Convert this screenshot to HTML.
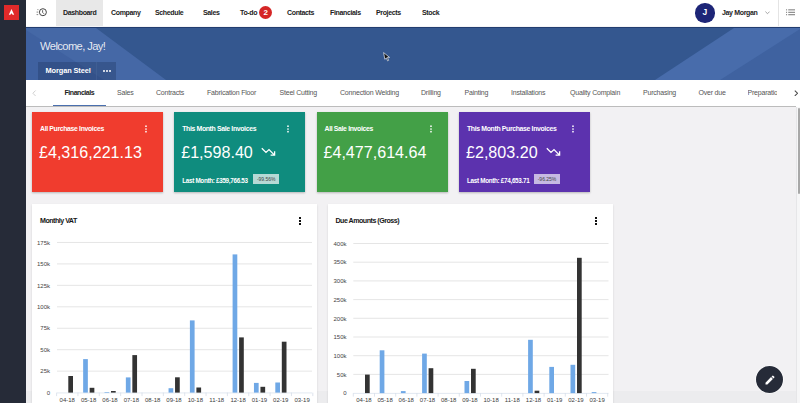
<!DOCTYPE html>
<html><head><meta charset="utf-8">
<style>
*{box-sizing:border-box;margin:0;padding:0}
html,body{width:800px;height:403px;overflow:hidden;background:#f2f1f3;font-family:"Liberation Sans",sans-serif}
.abs{position:absolute}
#side{left:0;top:0;width:26px;height:403px;background:#262b38}
#logo{left:4px;top:5px;width:15.4px;height:14.8px;background:#e12a2a;color:#fff;font-weight:bold;font-size:7px;text-align:center;line-height:15px}
#hdr{left:26px;top:0;width:774px;height:27px;background:#fff;border-bottom:1px solid #f4f4f6}
.nav{position:absolute;top:0;height:26px;line-height:26px;font-size:7px;font-weight:bold;color:#222;letter-spacing:-0.35px;white-space:nowrap}
#banner{left:26px;top:27px;width:774px;height:53px;background:#34578f;overflow:hidden;border-top:1px solid #223d70}
#tabs{left:26px;top:80px;width:770px;height:27px;background:#fff;border-bottom:1px solid #bcbcbc}
.tab{position:absolute;top:0;height:26px;line-height:26px;font-size:7px;color:#555;white-space:nowrap;letter-spacing:-0.2px}
.card{position:absolute;top:112px;height:80px;color:#fff;box-shadow:0 1px 2px rgba(0,0,0,.25)}
.card .t{position:absolute;left:8px;top:13px;font-size:6.9px;font-weight:bold;letter-spacing:-0.35px;white-space:nowrap}
.card .v{position:absolute;left:7px;top:30.7px;font-size:16.1px;white-space:nowrap;letter-spacing:0}
.card .dots{position:absolute;top:13px;width:2px;height:8px}
.card .dots i{display:block;width:1.6px;height:1.6px;background:#fff;margin-bottom:1.2px;border-radius:1px}
.card .lm{position:absolute;left:8px;top:64.5px;font-size:6.3px;font-weight:bold;letter-spacing:-0.3px;white-space:nowrap}
.card .bd{position:absolute;top:62px;height:10px;width:26px;font-size:5px;line-height:10px;text-align:center;color:#444}
.ch{position:absolute;top:204px;height:220px;background:#fff;box-shadow:0 1px 2px rgba(0,0,0,.12)}
.ch .title{position:absolute;left:8px;top:12.7px;font-size:7.1px;font-weight:bold;color:#161616;letter-spacing:-0.5px}
.ch .dots{position:absolute;top:13px;width:2px}
.ch .dots i{display:block;width:2px;height:2px;background:#111;margin-bottom:1px}
</style></head><body>
<div id="side" class="abs"></div>
<div id="logo" class="abs"><svg class="abs" style="left:0;top:0" width="15.4" height="15" viewBox="0 0 15.4 15"><path d="M7.5 3.9L10.2 9.8H8.6L7.5 8.3 6.4 9.8H4.8Z" fill="#fff"/></svg></div>
<div id="hdr" class="abs">
  <svg class="abs" style="left:8px;top:6px" width="16" height="14" viewBox="0 0 16 14">
    <circle cx="8.9" cy="6.2" r="3.5" fill="none" stroke="#3a3a3a" stroke-width=".95"/>
    <path d="M8.6 4.2V6.4L10 7.8" fill="none" stroke="#3a3a3a" stroke-width=".8"/>
    <path d="M3.4 3.6h1M2.6 6.1h1.6M2.6 8.6h1.6" stroke="#666" stroke-width=".8"/>
  </svg>
  <div class="abs" style="left:30px;top:0;width:47px;height:26px;background:#e8e8e8"></div>
  <div class="nav" style="left:37px">Dashboard</div>
  <div class="nav" style="left:85px">Company</div>
  <div class="nav" style="left:129px">Schedule</div>
  <div class="nav" style="left:177px">Sales</div>
  <div class="nav" style="left:214px">To-do</div>
  <div class="abs" style="left:233px;top:5.5px;width:13.3px;height:13.3px;border-radius:50%;background:#d52626;color:#fff;font-size:8px;font-weight:bold;text-align:center;line-height:13.5px">2</div>
  <div class="nav" style="left:261px">Contacts</div>
  <div class="nav" style="left:304px">Financials</div>
  <div class="nav" style="left:350px">Projects</div>
  <div class="nav" style="left:396px">Stock</div>
  <div class="abs" style="left:669px;top:3px;width:19.5px;height:19.5px;border-radius:50%;background:#1d2577;color:#fff;font-size:8.5px;font-weight:bold;text-align:center;line-height:19.5px">J</div>
  <div class="nav" style="left:696px">Jay Morgan</div>
  <svg class="abs" style="left:739px;top:11px" width="5" height="3.5" viewBox="0 0 5 3.5"><path d="M.4 .6L2.5 2.7 4.6.6" fill="none" stroke="#888" stroke-width=".75"/></svg>
  <div class="abs" style="left:752px;top:0;width:1px;height:26px;background:#e4e4e4"></div>
  <svg class="abs" style="left:760.3px;top:8.8px" width="9" height="7.5" viewBox="0 0 10 8">
    <path d="M0 .8h1.2M0 3.5h1.2M0 6.2h1.2M2.5 .8H10M2.5 3.5H10M2.5 6.2H10" stroke="#555" stroke-width=".9"/>
  </svg>
</div>
<div id="banner" class="abs">
  <svg width="774" height="52" viewBox="0 0 774 52" style="position:absolute;left:0;top:0">
    <polygon points="0,0 70,0 140,52 0,52" fill="#4568a6"/>
    <polygon points="0,2 78,52 0,52" fill="#3f61a0"/>
    <polygon points="629,52 708,0 774,0 774,52" fill="#486cab"/>
    <polygon points="694,52 774,1 774,52" fill="#3f62a0"/>
  </svg>
  <div class="abs" style="left:14px;top:12px;font-size:11.2px;color:rgba(255,255,255,.88);letter-spacing:-0.6px;white-space:nowrap">Welcome, Jay!</div>
  <div class="abs" style="left:12px;top:34px;width:78px;height:18px;background:rgba(20,40,80,.28)"></div>
  <div class="abs" style="left:70px;top:34px;width:1px;height:18px;background:rgba(80,110,160,.35)"></div>
  <div class="abs" style="left:19.5px;top:34px;line-height:18px;font-size:7.4px;font-weight:bold;color:#fff;white-space:nowrap;letter-spacing:-0.1px">Morgan Steel</div>
  <div class="abs" style="left:77px;top:42px;width:2px;height:2px;background:#fff;border-radius:1px;box-shadow:3px 0 0 #fff,6px 0 0 #fff"></div>
</div>
<div class="abs" style="left:796px;top:80px;width:4px;height:27px;background:#fff"></div>
<div id="tabs" class="abs">
  <svg class="abs" style="left:6.2px;top:10px" width="4.5" height="6.5" viewBox="0 0 4.5 6.5"><path d="M3.6 .5L.9 3.25 3.6 6" fill="none" stroke="#c4c4c4" stroke-width=".8"/></svg>
  <div class="tab" style="left:38.5px;color:#222;font-weight:bold;letter-spacing:-0.45px">Financials</div>
  <div class="abs" style="left:27px;top:25px;width:53px;height:1.4px;background:#4a6fae"></div>
  <div class="tab" style="left:91px">Sales</div>
  <div class="tab" style="left:130px">Contracts</div>
  <div class="tab" style="left:181px">Fabrication Floor</div>
  <div class="tab" style="left:253.5px">Steel Cutting</div>
  <div class="tab" style="left:314px">Connection Welding</div>
  <div class="tab" style="left:395px">Drilling</div>
  <div class="tab" style="left:438.5px">Painting</div>
  <div class="tab" style="left:485px">Installations</div>
  <div class="tab" style="left:544px">Quality Complain</div>
  <div class="tab" style="left:617px">Purchasing</div>
  <div class="tab" style="left:672.5px">Over due</div>
  <div class="tab" style="left:721.5px;width:29.3px;overflow:hidden">Preparation</div>
  <svg class="abs" style="left:767.5px;top:9.6px" width="4.5" height="6.5" viewBox="0 0 4.5 6.5"><path d="M.8 .6L3.5 3.25 .8 5.9" fill="none" stroke="#444" stroke-width="1.05"/></svg>
</div>
<svg class="abs" style="left:382.5px;top:51.5px" width="8" height="10" viewBox="0 0 8 10"><path d="M.6 .6L6.6 5.4H4.4L5.6 8.4 4.6 8.9 3.4 5.9 1.8 7.3Z" fill="#111" stroke="#e8eef8" stroke-width=".7"/></svg>
<div class="abs" style="left:26px;top:391px;width:771px;height:12px;background:#ececee"></div>
<div class="abs" style="left:796px;top:107px;width:4px;height:296px;background:#f6f6f7;border-left:1px solid #e6e6e8"></div>
<div class="abs" style="left:797.5px;top:108px;width:2.5px;height:86px;background:#a8a8a8;border-radius:1.2px"></div>

<div class="card" style="left:32px;width:131px;background:#f03c2e">
  <div class="t">All Purchase Invoices</div>
  <svg class="abs" style="left:112px;top:12px" width="4" height="10" viewBox="0 0 4 10"><circle cx="2" cy="2.2" r=".85" fill="#fff"/><circle cx="2" cy="5" r=".85" fill="#fff"/><circle cx="2" cy="7.7" r=".85" fill="#fff"/></svg>
  <div class="v">£4,316,221.13</div>
</div>
<div class="card" style="left:174.2px;width:131px;background:#0f8c7e">
  <div class="t">This Month Sale Invoices</div>
  <svg class="abs" style="left:112px;top:12px" width="4" height="10" viewBox="0 0 4 10"><circle cx="2" cy="2.2" r=".85" fill="#fff"/><circle cx="2" cy="5" r=".85" fill="#fff"/><circle cx="2" cy="7.7" r=".85" fill="#fff"/></svg>
  <div class="v">£1,598.40</div>
  <svg class="abs" style="left:87px;top:35px" width="16" height="10" viewBox="0 0 16 10"><path d="M.8 1.2L5 5.4 8 2.6 13 7.6M9.6 8.2H13.6V4.2" fill="none" stroke="#fff" stroke-width="1.3"/></svg>
  <div class="lm">Last Month: £359,766.53</div>
  <div class="bd" style="left:79px;background:#b6d9d5">-99.56%</div>
</div>
<div class="card" style="left:316.5px;width:131.5px;background:#43a047">
  <div class="t">All Sale Invoices</div>
  <svg class="abs" style="left:112px;top:12px" width="4" height="10" viewBox="0 0 4 10"><circle cx="2" cy="2.2" r=".85" fill="#fff"/><circle cx="2" cy="5" r=".85" fill="#fff"/><circle cx="2" cy="7.7" r=".85" fill="#fff"/></svg>
  <div class="v">£4,477,614.64</div>
</div>
<div class="card" style="left:459px;width:130.7px;background:#5c32ae">
  <div class="t">This Month Purchase Invoices</div>
  <svg class="abs" style="left:112px;top:12px" width="4" height="10" viewBox="0 0 4 10"><circle cx="2" cy="2.2" r=".85" fill="#fff"/><circle cx="2" cy="5" r=".85" fill="#fff"/><circle cx="2" cy="7.7" r=".85" fill="#fff"/></svg>
  <div class="v">£2,803.20</div>
  <svg class="abs" style="left:87px;top:35px" width="16" height="10" viewBox="0 0 16 10"><path d="M.8 1.2L5 5.4 8 2.6 13 7.6M9.6 8.2H13.6V4.2" fill="none" stroke="#fff" stroke-width="1.3"/></svg>
  <div class="lm">Last Month: £74,653.71</div>
  <div class="bd" style="left:75px;background:#c6b9e2">-96.25%</div>
</div>

<div class="ch" style="left:32px;width:285px">
  <div class="title">Monthly VAT</div>
  <div class="dots" style="left:266.5px"><i></i><i></i><i></i></div>
  <svg id="c1" class="abs" style="left:0;top:0" width="285" height="200"><text x="18" y="190.80" text-anchor="end" font-size="6" fill="#444">0</text><line x1="25" y1="167.15" x2="280" y2="167.15" stroke="#dedede" stroke-width="0.8"/><text x="18" y="169.35" text-anchor="end" font-size="6" fill="#444">25k</text><line x1="25" y1="145.70" x2="280" y2="145.70" stroke="#dedede" stroke-width="0.8"/><text x="18" y="147.90" text-anchor="end" font-size="6" fill="#444">50k</text><line x1="25" y1="124.25" x2="280" y2="124.25" stroke="#dedede" stroke-width="0.8"/><text x="18" y="126.45" text-anchor="end" font-size="6" fill="#444">75k</text><line x1="25" y1="102.80" x2="280" y2="102.80" stroke="#dedede" stroke-width="0.8"/><text x="18" y="105.00" text-anchor="end" font-size="6" fill="#444">100k</text><line x1="25" y1="81.35" x2="280" y2="81.35" stroke="#dedede" stroke-width="0.8"/><text x="18" y="83.55" text-anchor="end" font-size="6" fill="#444">125k</text><line x1="25" y1="59.90" x2="280" y2="59.90" stroke="#dedede" stroke-width="0.8"/><text x="18" y="62.10" text-anchor="end" font-size="6" fill="#444">150k</text><line x1="25" y1="38.45" x2="280" y2="38.45" stroke="#dedede" stroke-width="0.8"/><text x="18" y="40.65" text-anchor="end" font-size="6" fill="#444">175k</text><line x1="25" y1="188.90" x2="280" y2="188.90" stroke="#dbe3ee" stroke-width="0.8"/><line x1="24.60" y1="188.60" x2="24.60" y2="192.10" stroke="#d5dde8" stroke-width="0.8"/><line x1="45.95" y1="188.60" x2="45.95" y2="192.10" stroke="#d5dde8" stroke-width="0.8"/><line x1="67.30" y1="188.60" x2="67.30" y2="192.10" stroke="#d5dde8" stroke-width="0.8"/><line x1="88.65" y1="188.60" x2="88.65" y2="192.10" stroke="#d5dde8" stroke-width="0.8"/><line x1="110.00" y1="188.60" x2="110.00" y2="192.10" stroke="#d5dde8" stroke-width="0.8"/><line x1="131.35" y1="188.60" x2="131.35" y2="192.10" stroke="#d5dde8" stroke-width="0.8"/><line x1="152.70" y1="188.60" x2="152.70" y2="192.10" stroke="#d5dde8" stroke-width="0.8"/><line x1="174.05" y1="188.60" x2="174.05" y2="192.10" stroke="#d5dde8" stroke-width="0.8"/><line x1="195.40" y1="188.60" x2="195.40" y2="192.10" stroke="#d5dde8" stroke-width="0.8"/><line x1="216.75" y1="188.60" x2="216.75" y2="192.10" stroke="#d5dde8" stroke-width="0.8"/><line x1="238.10" y1="188.60" x2="238.10" y2="192.10" stroke="#d5dde8" stroke-width="0.8"/><line x1="259.45" y1="188.60" x2="259.45" y2="192.10" stroke="#d5dde8" stroke-width="0.8"/><line x1="280.80" y1="188.60" x2="280.80" y2="192.10" stroke="#d5dde8" stroke-width="0.8"/><text x="35.28" y="197.60" text-anchor="middle" font-size="6" fill="#3c3c3c">04-18</text><rect x="36.30" y="172.00" width="4.7" height="16.60" fill="#333"/><text x="56.62" y="197.60" text-anchor="middle" font-size="6" fill="#3c3c3c">05-18</text><rect x="51.15" y="155.10" width="4.7" height="33.50" fill="#6fa8e6"/><rect x="57.65" y="183.80" width="4.7" height="4.80" fill="#333"/><text x="77.98" y="197.60" text-anchor="middle" font-size="6" fill="#3c3c3c">06-18</text><rect x="72.50" y="188.00" width="4.7" height="0.60" fill="#6fa8e6"/><rect x="79.00" y="187.00" width="4.7" height="1.60" fill="#333"/><text x="99.33" y="197.60" text-anchor="middle" font-size="6" fill="#3c3c3c">07-18</text><rect x="93.85" y="173.40" width="4.7" height="15.20" fill="#6fa8e6"/><rect x="100.35" y="151.10" width="4.7" height="37.50" fill="#333"/><text x="120.67" y="197.60" text-anchor="middle" font-size="6" fill="#3c3c3c">08-18</text><text x="142.03" y="197.60" text-anchor="middle" font-size="6" fill="#3c3c3c">09-18</text><rect x="136.55" y="184.20" width="4.7" height="4.40" fill="#6fa8e6"/><rect x="143.05" y="173.30" width="4.7" height="15.30" fill="#333"/><text x="163.38" y="197.60" text-anchor="middle" font-size="6" fill="#3c3c3c">10-18</text><rect x="157.90" y="116.40" width="4.7" height="72.20" fill="#6fa8e6"/><rect x="164.40" y="183.50" width="4.7" height="5.10" fill="#333"/><text x="184.73" y="197.60" text-anchor="middle" font-size="6" fill="#3c3c3c">11-18</text><text x="206.08" y="197.60" text-anchor="middle" font-size="6" fill="#3c3c3c">12-18</text><rect x="200.60" y="50.40" width="4.7" height="138.20" fill="#6fa8e6"/><rect x="207.10" y="133.40" width="4.7" height="55.20" fill="#333"/><text x="227.43" y="197.60" text-anchor="middle" font-size="6" fill="#3c3c3c">01-19</text><rect x="221.95" y="178.90" width="4.7" height="9.70" fill="#6fa8e6"/><rect x="228.45" y="182.80" width="4.7" height="5.80" fill="#333"/><text x="248.78" y="197.60" text-anchor="middle" font-size="6" fill="#3c3c3c">02-19</text><rect x="243.30" y="178.50" width="4.7" height="10.10" fill="#6fa8e6"/><rect x="249.80" y="137.70" width="4.7" height="50.90" fill="#333"/><text x="270.13" y="197.60" text-anchor="middle" font-size="6" fill="#3c3c3c">03-19</text></svg>
</div>
<div class="ch" style="left:327.5px;width:285.5px">
  <div class="title">Due Amounts (Gross)</div>
  <div class="dots" style="left:267.5px"><i></i><i></i><i></i></div>
  <svg id="c2" class="abs" style="left:0;top:0" width="285" height="200"><text x="18.5" y="191.30" text-anchor="end" font-size="6" fill="#444">0</text><line x1="25.3" y1="170.40" x2="280.5" y2="170.40" stroke="#dedede" stroke-width="0.8"/><text x="18.5" y="172.60" text-anchor="end" font-size="6" fill="#444">50k</text><line x1="25.3" y1="151.70" x2="280.5" y2="151.70" stroke="#dedede" stroke-width="0.8"/><text x="18.5" y="153.90" text-anchor="end" font-size="6" fill="#444">100k</text><line x1="25.3" y1="133.00" x2="280.5" y2="133.00" stroke="#dedede" stroke-width="0.8"/><text x="18.5" y="135.20" text-anchor="end" font-size="6" fill="#444">150k</text><line x1="25.3" y1="114.30" x2="280.5" y2="114.30" stroke="#dedede" stroke-width="0.8"/><text x="18.5" y="116.50" text-anchor="end" font-size="6" fill="#444">200k</text><line x1="25.3" y1="95.60" x2="280.5" y2="95.60" stroke="#dedede" stroke-width="0.8"/><text x="18.5" y="97.80" text-anchor="end" font-size="6" fill="#444">250k</text><line x1="25.3" y1="76.90" x2="280.5" y2="76.90" stroke="#dedede" stroke-width="0.8"/><text x="18.5" y="79.10" text-anchor="end" font-size="6" fill="#444">300k</text><line x1="25.3" y1="58.20" x2="280.5" y2="58.20" stroke="#dedede" stroke-width="0.8"/><text x="18.5" y="60.40" text-anchor="end" font-size="6" fill="#444">350k</text><line x1="25.3" y1="39.50" x2="280.5" y2="39.50" stroke="#dedede" stroke-width="0.8"/><text x="18.5" y="41.70" text-anchor="end" font-size="6" fill="#444">400k</text><line x1="25.3" y1="189.40" x2="280.5" y2="189.40" stroke="#dbe3ee" stroke-width="0.8"/><line x1="25.30" y1="189.10" x2="25.30" y2="192.60" stroke="#d5dde8" stroke-width="0.8"/><line x1="46.50" y1="189.10" x2="46.50" y2="192.60" stroke="#d5dde8" stroke-width="0.8"/><line x1="67.70" y1="189.10" x2="67.70" y2="192.60" stroke="#d5dde8" stroke-width="0.8"/><line x1="88.90" y1="189.10" x2="88.90" y2="192.60" stroke="#d5dde8" stroke-width="0.8"/><line x1="110.10" y1="189.10" x2="110.10" y2="192.60" stroke="#d5dde8" stroke-width="0.8"/><line x1="131.30" y1="189.10" x2="131.30" y2="192.60" stroke="#d5dde8" stroke-width="0.8"/><line x1="152.50" y1="189.10" x2="152.50" y2="192.60" stroke="#d5dde8" stroke-width="0.8"/><line x1="173.70" y1="189.10" x2="173.70" y2="192.60" stroke="#d5dde8" stroke-width="0.8"/><line x1="194.90" y1="189.10" x2="194.90" y2="192.60" stroke="#d5dde8" stroke-width="0.8"/><line x1="216.10" y1="189.10" x2="216.10" y2="192.60" stroke="#d5dde8" stroke-width="0.8"/><line x1="237.30" y1="189.10" x2="237.30" y2="192.60" stroke="#d5dde8" stroke-width="0.8"/><line x1="258.50" y1="189.10" x2="258.50" y2="192.60" stroke="#d5dde8" stroke-width="0.8"/><line x1="279.70" y1="189.10" x2="279.70" y2="192.60" stroke="#d5dde8" stroke-width="0.8"/><text x="35.90" y="198.10" text-anchor="middle" font-size="6" fill="#3c3c3c">04-18</text><rect x="37.00" y="170.60" width="4.7" height="18.50" fill="#333"/><text x="57.10" y="198.10" text-anchor="middle" font-size="6" fill="#3c3c3c">05-18</text><rect x="51.70" y="146.30" width="4.7" height="42.80" fill="#6fa8e6"/><text x="78.30" y="198.10" text-anchor="middle" font-size="6" fill="#3c3c3c">06-18</text><rect x="72.90" y="187.10" width="4.7" height="2.00" fill="#6fa8e6"/><text x="99.50" y="198.10" text-anchor="middle" font-size="6" fill="#3c3c3c">07-18</text><rect x="94.10" y="149.60" width="4.7" height="39.50" fill="#6fa8e6"/><rect x="100.60" y="164.20" width="4.7" height="24.90" fill="#333"/><text x="120.70" y="198.10" text-anchor="middle" font-size="6" fill="#3c3c3c">08-18</text><text x="141.90" y="198.10" text-anchor="middle" font-size="6" fill="#3c3c3c">09-18</text><rect x="136.50" y="177.00" width="4.7" height="12.10" fill="#6fa8e6"/><rect x="143.00" y="164.80" width="4.7" height="24.30" fill="#333"/><text x="163.10" y="198.10" text-anchor="middle" font-size="6" fill="#3c3c3c">10-18</text><text x="184.30" y="198.10" text-anchor="middle" font-size="6" fill="#3c3c3c">11-18</text><text x="205.50" y="198.10" text-anchor="middle" font-size="6" fill="#3c3c3c">12-18</text><rect x="200.10" y="135.80" width="4.7" height="53.30" fill="#6fa8e6"/><rect x="206.60" y="186.70" width="4.7" height="2.40" fill="#333"/><text x="226.70" y="198.10" text-anchor="middle" font-size="6" fill="#3c3c3c">01-19</text><rect x="221.30" y="162.90" width="4.7" height="26.20" fill="#6fa8e6"/><text x="247.90" y="198.10" text-anchor="middle" font-size="6" fill="#3c3c3c">02-19</text><rect x="242.50" y="160.80" width="4.7" height="28.30" fill="#6fa8e6"/><rect x="249.00" y="53.80" width="4.7" height="135.30" fill="#333"/><text x="269.10" y="198.10" text-anchor="middle" font-size="6" fill="#3c3c3c">03-19</text><rect x="263.70" y="188.10" width="4.7" height="1.00" fill="#6fa8e6"/></svg>
</div>

<div class="abs" style="left:756px;top:366px;width:27px;height:27px;border-radius:50%;background:#262b38;box-shadow:0 0 0 .6px #fff">
  <svg class="abs" style="left:7.5px;top:7.8px" width="12" height="12" viewBox="0 0 24 24"><path d="M3 17.25V21h3.75L17.81 9.94l-3.75-3.75L3 17.25zM20.71 7.04a1 1 0 0 0 0-1.41l-2.34-2.34a1 1 0 0 0-1.41 0l-1.83 1.83 3.75 3.75 1.83-1.83z" fill="#fff"/></svg>
</div>
</body></html>
